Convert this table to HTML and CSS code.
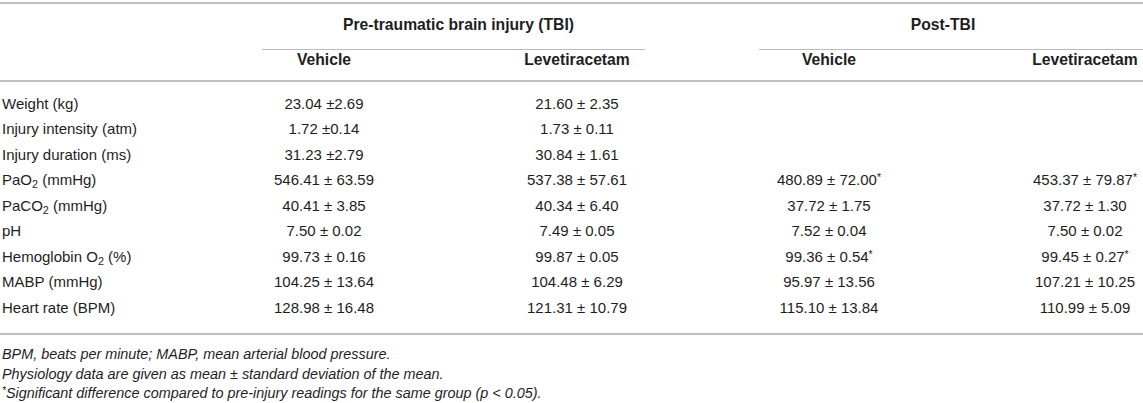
FILE: index.html
```html
<!DOCTYPE html>
<html>
<head>
    <title>Physiology data</title>
    <link rel="stylesheet" href="styles.css">
</head>
<body>
    <table class="dataTable">
        <colgroup>
            <col class="colLabel">
            <col class="colPreVeh">
            <col class="colPreLev">
            <col class="colPostVeh">
            <col class="colPostLev">
        </colgroup>
        <thead>
            <tr class="groupRow">
                <th></th>
                <th colspan="2"><div class="groupHead preGroup">Pre-traumatic brain injury (TBI)</div></th>
                <th colspan="2"><div class="groupHead postGroup">Post-TBI</div></th>
            </tr>
            <tr class="subRow">
                <th></th>
                <th class="preVeh">Vehicle</th>
                <th class="preLev">Levetiracetam</th>
                <th class="postVeh">Vehicle</th>
                <th class="postLev">Levetiracetam</th>
            </tr>
        </thead>
        <tbody>
            <tr>
                <td class="label">Weight (kg)</td>
                <td class="preVeh">23.04 ±2.69</td>
                <td class="preLev">21.60 ± 2.35</td>
                <td class="postVeh"></td>
                <td class="postLev"></td>
            </tr>
            <tr>
                <td class="label">Injury intensity (atm)</td>
                <td class="preVeh">1.72 ±0.14</td>
                <td class="preLev">1.73 ± 0.11</td>
                <td class="postVeh"></td>
                <td class="postLev"></td>
            </tr>
            <tr>
                <td class="label">Injury duration (ms)</td>
                <td class="preVeh">31.23 ±2.79</td>
                <td class="preLev">30.84 ± 1.61</td>
                <td class="postVeh"></td>
                <td class="postLev"></td>
            </tr>
            <tr>
                <td class="label">PaO<sub>2</sub> (mmHg)</td>
                <td class="preVeh">546.41 ± 63.59</td>
                <td class="preLev">537.38 ± 57.61</td>
                <td class="postVeh">480.89 ± 72.00<sup>*</sup></td>
                <td class="postLev">453.37 ± 79.87<sup>*</sup></td>
            </tr>
            <tr>
                <td class="label">PaCO<sub>2</sub> (mmHg)</td>
                <td class="preVeh">40.41 ± 3.85</td>
                <td class="preLev">40.34 ± 6.40</td>
                <td class="postVeh">37.72 ± 1.75</td>
                <td class="postLev">37.72 ± 1.30</td>
            </tr>
            <tr>
                <td class="label">pH</td>
                <td class="preVeh">7.50 ± 0.02</td>
                <td class="preLev">7.49 ± 0.05</td>
                <td class="postVeh">7.52 ± 0.04</td>
                <td class="postLev">7.50 ± 0.02</td>
            </tr>
            <tr>
                <td class="label">Hemoglobin O<sub>2</sub> (%)</td>
                <td class="preVeh">99.73 ± 0.16</td>
                <td class="preLev">99.87 ± 0.05</td>
                <td class="postVeh">99.36 ± 0.54<sup>*</sup></td>
                <td class="postLev">99.45 ± 0.27<sup>*</sup></td>
            </tr>
            <tr>
                <td class="label">MABP (mmHg)</td>
                <td class="preVeh">104.25 ± 13.64</td>
                <td class="preLev">104.48 ± 6.29</td>
                <td class="postVeh">95.97 ± 13.56</td>
                <td class="postLev">107.21 ± 10.25</td>
            </tr>
            <tr>
                <td class="label">Heart rate (BPM)</td>
                <td class="preVeh">128.98 ± 16.48</td>
                <td class="preLev">121.31 ± 10.79</td>
                <td class="postVeh">115.10 ± 13.84</td>
                <td class="postLev">110.99 ± 5.09</td>
            </tr>
        </tbody>
    </table>

    <div class="notes">
        <p>BPM, beats per minute; MABP, mean arterial blood pressure.</p>
        <p>Physiology data are given as mean ± standard deviation of the mean.</p>
        <p><sup>*</sup>Significant difference compared to pre-injury readings for the same group (p &lt; 0.05).</p>
    </div>
</body>
</html>
```

FILE: styles.css
```css
body {
    margin: 0;
    font-family: "Liberation Sans", Arial, sans-serif;
    color: #1e1e1e;
    background: #ffffff;
}

.dataTable {
    width: 1143px;
    margin-top: 2px;
    table-layout: fixed;
    border-collapse: separate;
    border-spacing: 0;
    border-top: 2px solid #c0c0c0;
    border-bottom: 2px solid #c0c0c0;
    font-size: 15px;
}

.colLabel { width: 262px; }
.colPreVeh { width: 124px; }
.colPreLev { width: 373px; }
.colPostVeh { width: 268px; }
.colPostLev { width: 116px; }

th, td {
    padding: 0;
    text-align: center;
    white-space: nowrap;
}

th {
    font-weight: bold;
    font-size: 15.7px;
    line-height: 20px;
}

.groupRow th {
    vertical-align: bottom;
}

.groupHead {
    padding: 11px 0 14px;
    border-bottom: 1px solid #bbbbbb;
}

.preGroup {
    margin-right: 114px;
    padding-left: 10px;
}

.postGroup {
    padding-right: 16px;
}

.subRow th {
    padding-bottom: 10px;
    border-bottom: 2px solid #c0c0c0;
}

td {
    line-height: 25.5px;
}

tbody tr:first-child td {
    padding-top: 8.5px;
}

tbody tr:last-child td {
    padding-bottom: 13px;
}

.label {
    text-align: left;
    padding-left: 2px;
}

.preLev {
    padding-left: 9px;
}

.postVeh {
    padding-right: 128px;
}

sub {
    font-size: 0.72em;
    vertical-align: -0.25em;
    line-height: 0;
}

sup {
    font-size: 0.7em;
    vertical-align: 0.35em;
    line-height: 0;
}

.notes {
    margin-top: 10px;
    font-style: italic;
    font-size: 14.4px;
    line-height: 19.5px;
}

.notes p {
    margin: 0;
    padding-left: 2px;
}
```
